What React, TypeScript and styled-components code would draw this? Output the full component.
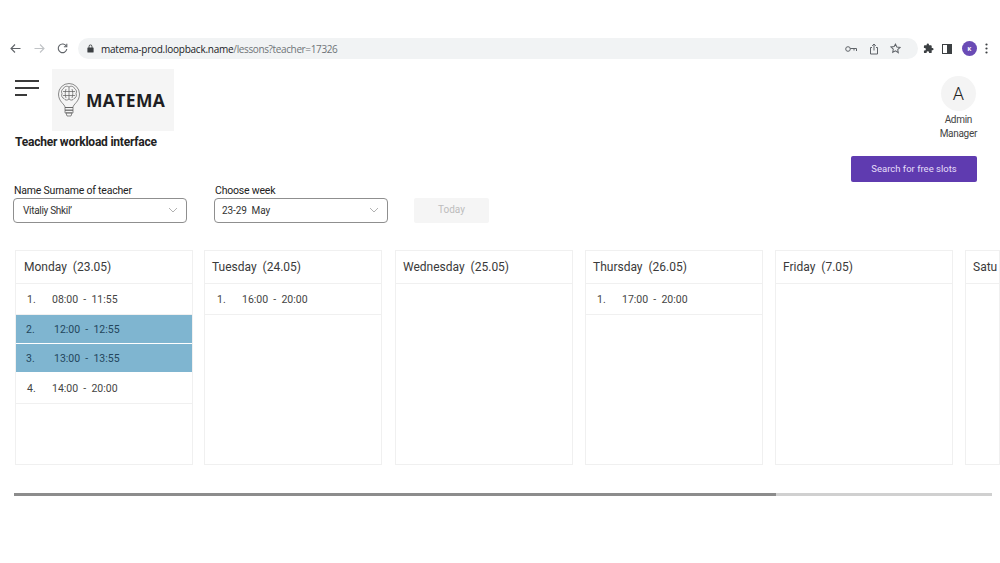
import React from 'react';
import { styled, createGlobalStyle } from 'styled-components';

const GlobalStyle = createGlobalStyle`
  html, body {
    margin: 0;
    padding: 0;
    background: #fff;
    overflow: hidden;
  }
  * { box-sizing: border-box; }
`;

const Page = styled.div`
  width: 1000px;
  height: 563px;
  padding-top: 38px;
  overflow: hidden;
  font-family: Roboto, 'Liberation Sans', sans-serif;
  color: #2b2b2b;
`;

const BrowserBar = styled.div`
  display: flex;
  align-items: center;
  height: 21px;
  padding-left: 10px;
`;

const NavIcons = styled.div`
  display: flex;
  align-items: center;
  gap: 12.5px;
  width: 68px;
`;

const UrlPill = styled.div`
  display: flex;
  align-items: center;
  width: 840px;
  height: 21px;
  padding: 0 10px 0 9px;
  border-radius: 11px;
  background: #f1f3f4;
  font-family: 'Open Sans', sans-serif;
  font-size: 10px;
`;

const Host = styled.span`
  color: #202124;
  margin-left: 7px;
  letter-spacing: -0.25px;
`;

const UrlPath = styled.span`
  color: #6f7377;
  letter-spacing: -0.37px;
`;

const PillIcons = styled.div`
  display: flex;
  align-items: center;
  gap: 11.5px;
  margin-left: auto;
  padding-right: 7px;
`;

const ToolIcons = styled.div`
  display: flex;
  align-items: center;
  gap: 8px;
  margin-left: 5px;
`;

const Profile = styled.div`
  display: flex;
  align-items: center;
  justify-content: center;
  width: 15px;
  height: 15px;
  border-radius: 50%;
  background: #6a4bb5;
  color: #fff;
  font-size: 6px;
  font-weight: 700;
  margin-left: 2px;
`;

const Header = styled.div`
  display: flex;
  justify-content: space-between;
  height: 131px;
  padding: 10px 23px 0 15px;
`;

const Brand = styled.div`
  display: flex;
  flex-direction: column;
`;

const BrandRow = styled.div`
  display: flex;
  align-items: flex-start;
  gap: 13px;
`;

const Burger = styled.div`
  display: flex;
  flex-direction: column;
  gap: 5.5px;
  width: 24px;
  padding-top: 11px;
`;

const BurgerLine = styled.div<{ $short?: boolean }>`
  height: 1.5px;
  width: ${(p) => (p.$short ? '12px' : '24px')};
  background: #3a3a3a;
`;

const LogoBox = styled.div`
  display: flex;
  align-items: center;
  gap: 6px;
  width: 122px;
  height: 62px;
  padding-left: 6px;
  background: #f5f5f5;
`;

const LogoText = styled.span`
  font-family: 'Open Sans', sans-serif;
  font-weight: 700;
  font-size: 17.5px;
  letter-spacing: 0.35px;
  color: #1d1d22;
`;

const PageTitle = styled.div`
  margin-top: 4px;
  font-size: 12px;
  font-weight: 700;
  line-height: 14px;
  letter-spacing: -0.22px;
  color: #222;
`;

const Side = styled.div`
  display: flex;
  flex-direction: column;
  align-items: flex-end;
`;

const UserBlock = styled.div`
  display: flex;
  flex-direction: column;
  align-items: center;
  margin-top: 7px;
`;

const Avatar = styled.div`
  display: flex;
  align-items: center;
  justify-content: center;
  width: 35px;
  height: 35px;
  border-radius: 50%;
  background: #f4f4f4;
  font-size: 18px;
  font-weight: 300;
  color: #222;
`;

const UserName = styled.div`
  margin-top: 2px;
  font-size: 10px;
  line-height: 14px;
  letter-spacing: -0.3px;
  text-align: center;
  color: #444;
`;

const SearchButton = styled.div`
  display: flex;
  align-items: center;
  justify-content: center;
  width: 126px;
  height: 26px;
  margin-top: 15px;
  padding-bottom: 1px;
  border-radius: 2px;
  background: #5f3bb0;
  color: #e6defa;
  font-size: 9.5px;
`;

const Filters = styled.div`
  display: flex;
  align-items: flex-end;
  height: 35px;
  margin-top: -2px;
  padding-left: 13px;
`;

const Field = styled.div<{ $gap: number }>`
  display: flex;
  flex-direction: column;
  margin-right: ${(p) => p.$gap}px;
`;

const FieldLabel = styled.div`
  height: 14px;
  padding-left: 1px;
  font-size: 10.5px;
  line-height: 13px;
  letter-spacing: -0.2px;
  color: #222;
`;

const Select = styled.div<{ $width: number; $inset: number; $tight?: boolean }>`
  display: flex;
  align-items: center;
  justify-content: space-between;
  width: ${(p) => p.$width}px;
  height: 25px;
  padding: 0 8px 1px ${(p) => p.$inset}px;
  border: 1px solid #8f8f8f;
  border-radius: 4px;
  font-size: 10px;
  letter-spacing: ${(p) => (p.$tight ? '-0.3px' : '-0.1px')};
  color: #333;
`;

const TodayButton = styled.div`
  display: flex;
  align-items: center;
  justify-content: center;
  width: 75px;
  height: 25px;
  padding-bottom: 2px;
  border-radius: 2px;
  background: #f5f5f5;
  color: #bdbdbd;
  font-size: 10px;
`;

const DayTitle = styled.div`
  display: flex;
  align-items: center;
  height: 33px;
  padding-left: 7px;
  border-bottom: 1px solid #f0f0f0;
  font-size: 12px;
  white-space: pre;
  overflow: hidden;
  color: #3a3a3a;
`;

const SlotRow = styled.div<{ $busy?: boolean; $height: number }>`
  display: flex;
  align-items: center;
  height: ${(p) => p.$height}px;
  padding-left: ${(p) => (p.$busy ? '10px' : '11px')};
  font-size: 10.5px;
  color: ${(p) => (p.$busy ? '#23465c' : '#444')};
  background: ${(p) => (p.$busy ? '#7fb5d0' : 'transparent')};
  border-bottom: 1px solid ${(p) => (p.$busy ? '#ffffff' : '#f0f0f0')};
`;

const DayCard = styled.div`
  flex: 0 0 178px;
  height: 215px;
  border: 1px solid #f0f0f0;

  &:first-child ${DayTitle} {
    padding-left: 8px;
  }

  &:nth-child(2) {
    margin: 0 1px 0 -1px;
  }

  &:nth-child(2) ${SlotRow} {
    padding-left: 12px;
  }

  &:last-child {
    flex-basis: 35px;
  }
`;

const Days = styled.div`
  display: flex;
  gap: 12px;
  margin-top: 27px;
  padding-left: 15px;
  overflow: hidden;
`;

const SlotIndex = styled.span<{ $busy?: boolean }>`
  width: ${(p) => (p.$busy ? '28px' : '25px')};
`;

const SlotTime = styled.span`
  white-space: pre;
`;

const ScrollTrack = styled.div`
  width: 978px;
  height: 3px;
  margin: 28px 0 0 14px;
  background: #d0d0d0;
`;

const ScrollThumb = styled.div`
  width: 762px;
  height: 3px;
  background: #8c8c8c;
`;

const Chevron = () => (
  <svg width="10" height="6" viewBox="0 0 10 6" fill="none" stroke="#a9a9a9" strokeWidth="0.9">
    <path d="M1 1l4 4 4-4" />
  </svg>
);

const BulbIcon = () => (
  <svg width="22" height="35" viewBox="0 0 22 35" fill="none" stroke="#5a5a5a" strokeWidth="0.7">
    <path d="M7 24.500c0-3.500-6.500-5.500-6.500-13.500a10.500 10.500 0 0 1 21 0c0 8-6.500 10-6.500 13.500z" />
    <path d="M11 4c-2-1.500-5-.5-5.500 1.500C3.500 6.500 3 9 4 10.500c-1 2 0 4.500 2 5 1 2 3.500 2 5 .5 1.500 1.500 4 1.500 5-.5 2-.5 3-3 2-5 1-1.500.5-4-1.500-5C16 3.500 13 2.500 11 4z" />
    <path d="M11 4v12M5 8.500h12M5 12.500h12M8 6c-1 3-1 6 0 9M14 6c1 3 1 6 0 9" />
    <path d="M7 24.500h8v2.700H7zM7 27.200h8v2.700H7zM8 29.900h6l-1 3.100H9z" />
  </svg>
);

const days = [
  {
    title: 'Monday  (23.05)',
    slots: [
      { time: '08:00  -  11:55', height: 31 },
      { time: '12:00  -  12:55', height: 29, busy: true },
      { time: '13:00  -  13:55', height: 29, busy: true },
      { time: '14:00  -  20:00', height: 31 },
    ],
  },
  { title: 'Tuesday  (24.05)', slots: [{ time: '16:00  -  20:00', height: 31 }] },
  { title: 'Wednesday  (25.05)', slots: [] },
  { title: 'Thursday  (26.05)', slots: [{ time: '17:00  -  20:00', height: 31 }] },
  { title: 'Friday  (7.05)', slots: [] },
  { title: 'Satu', slots: [] },
];

const App: React.FC = () => {
  return (
    <Page>
      <GlobalStyle />
      <BrowserBar>
        <NavIcons>
          <svg width="11" height="11" viewBox="0 0 11 11" fill="none" stroke="#5f6368" strokeWidth="1.1">
            <path d="M10.5 5.5H1M5 1.5l-4 4 4 4" />
          </svg>
          <svg width="11" height="11" viewBox="0 0 11 11" fill="none" stroke="#c0c3c6" strokeWidth="1.1">
            <path d="M.5 5.5H10M6 1.5l4 4-4 4" />
          </svg>
          <svg width="11" height="11" viewBox="0 0 11 11" fill="none" stroke="#5f6368" strokeWidth="1.1">
            <path d="M9.3 3.2A4.3 4.3 0 1 0 9.8 6" />
            <path d="M9.8 .8v3H6.9" />
          </svg>
        </NavIcons>
        <UrlPill>
          <svg width="7" height="9" viewBox="0 0 7 9" fill="#3c4043">
            <path d="M1 3.5h.6V2.4a1.9 1.9 0 0 1 3.8 0v1.1H6a.6.6 0 0 1 .6.6v3.8a.6.6 0 0 1-.6.6H1a.6.6 0 0 1-.6-.6V4.100a.6.6 0 0 1 .6-.6zm1.400 0h2.200V2.400a1.100 1.100 0 0 0-2.200 0z" />
          </svg>
          <Host>matema-prod.loopback.name</Host>
          <UrlPath>/lessons?teacher=17326</UrlPath>
          <PillIcons>
            <svg width="12" height="8" viewBox="0 0 12 8" fill="none" stroke="#5f6368" strokeWidth="1">
              <circle cx="3" cy="4" r="2.300" />
              <path d="M5.300 3.500H11.500V6M9 3.500V5.500" />
            </svg>
            <svg width="10" height="12" viewBox="0 0 10 12" fill="none" stroke="#5f6368" strokeWidth="1">
              <path d="M3 4.500H1.500v6.500h7V4.500H7M5 7.500V1M3.200 2.800L5 1l1.800 1.800" />
            </svg>
            <svg width="11" height="11" viewBox="0 0 24 24" fill="none" stroke="#5f6368" strokeWidth="2.200">
              <path d="M12 2.500l3 6.300 6.800.9-5 4.700 1.300 6.800L12 17l-6.100 3.200 1.300-6.800-5-4.700 6.800-.9z" />
            </svg>
          </PillIcons>
        </UrlPill>
        <ToolIcons>
          <svg width="11" height="11" viewBox="0 0 24 24" fill="#3c4043">
            <path d="M20.500 11H19V7a2 2 0 0 0-2-2h-4V3.500a2.500 2.500 0 0 0-5 0V5H4a2 2 0 0 0-2 2v3.800h1.500a2.700 2.700 0 0 1 0 5.400H2V20a2 2 0 0 0 2 2h3.800v-1.500a2.700 2.700 0 0 1 5.400 0V22H17a2 2 0 0 0 2-2v-4h1.500a2.500 2.500 0 0 0 0-5z" />
          </svg>
          <svg width="10" height="10" viewBox="0 0 10 10">
            <rect x=".5" y=".5" width="9" height="9" fill="none" stroke="#3c4043" />
            <rect x="5" y="1" width="4" height="8" fill="#3c4043" />
          </svg>
          <Profile>K</Profile>
          <svg width="3" height="11" viewBox="0 0 3 11" fill="#3c4043">
            <circle cx="1.500" cy="1.500" r="1.100" />
            <circle cx="1.500" cy="5.500" r="1.100" />
            <circle cx="1.500" cy="9.500" r="1.100" />
          </svg>
        </ToolIcons>
      </BrowserBar>

      <Header>
        <Brand>
          <BrandRow>
            <Burger>
              <BurgerLine />
              <BurgerLine />
              <BurgerLine $short />
            </Burger>
            <LogoBox>
              <BulbIcon />
              <LogoText>MATEMA</LogoText>
            </LogoBox>
          </BrandRow>
          <PageTitle>Teacher workload interface</PageTitle>
        </Brand>
        <Side>
          <UserBlock>
            <Avatar>A</Avatar>
            <UserName>
              Admin
              <br />
              Manager
            </UserName>
          </UserBlock>
          <SearchButton>Search for free slots</SearchButton>
        </Side>
      </Header>

      <Filters>
        <Field $gap={27}>
          <FieldLabel>Name Surname of teacher</FieldLabel>
          <Select $width={174} $inset={9} $tight>
            Vitaliy Shkil’
            <Chevron />
          </Select>
        </Field>
        <Field $gap={26}>
          <FieldLabel>Choose week</FieldLabel>
          <Select $width={174} $inset={7}>
            23-29&nbsp; May
            <Chevron />
          </Select>
        </Field>
        <TodayButton>Today</TodayButton>
      </Filters>

      <Days>
        {days.map((day) => (
          <DayCard key={day.title}>
            <DayTitle>{day.title}</DayTitle>
            {day.slots.map((slot, index) => (
              <SlotRow key={slot.time} $busy={slot.busy} $height={slot.height}>
                <SlotIndex $busy={slot.busy}>{index + 1}.</SlotIndex>
                <SlotTime>{slot.time}</SlotTime>
              </SlotRow>
            ))}
          </DayCard>
        ))}
      </Days>

      <ScrollTrack>
        <ScrollThumb />
      </ScrollTrack>
    </Page>
  );
};

export default App;
